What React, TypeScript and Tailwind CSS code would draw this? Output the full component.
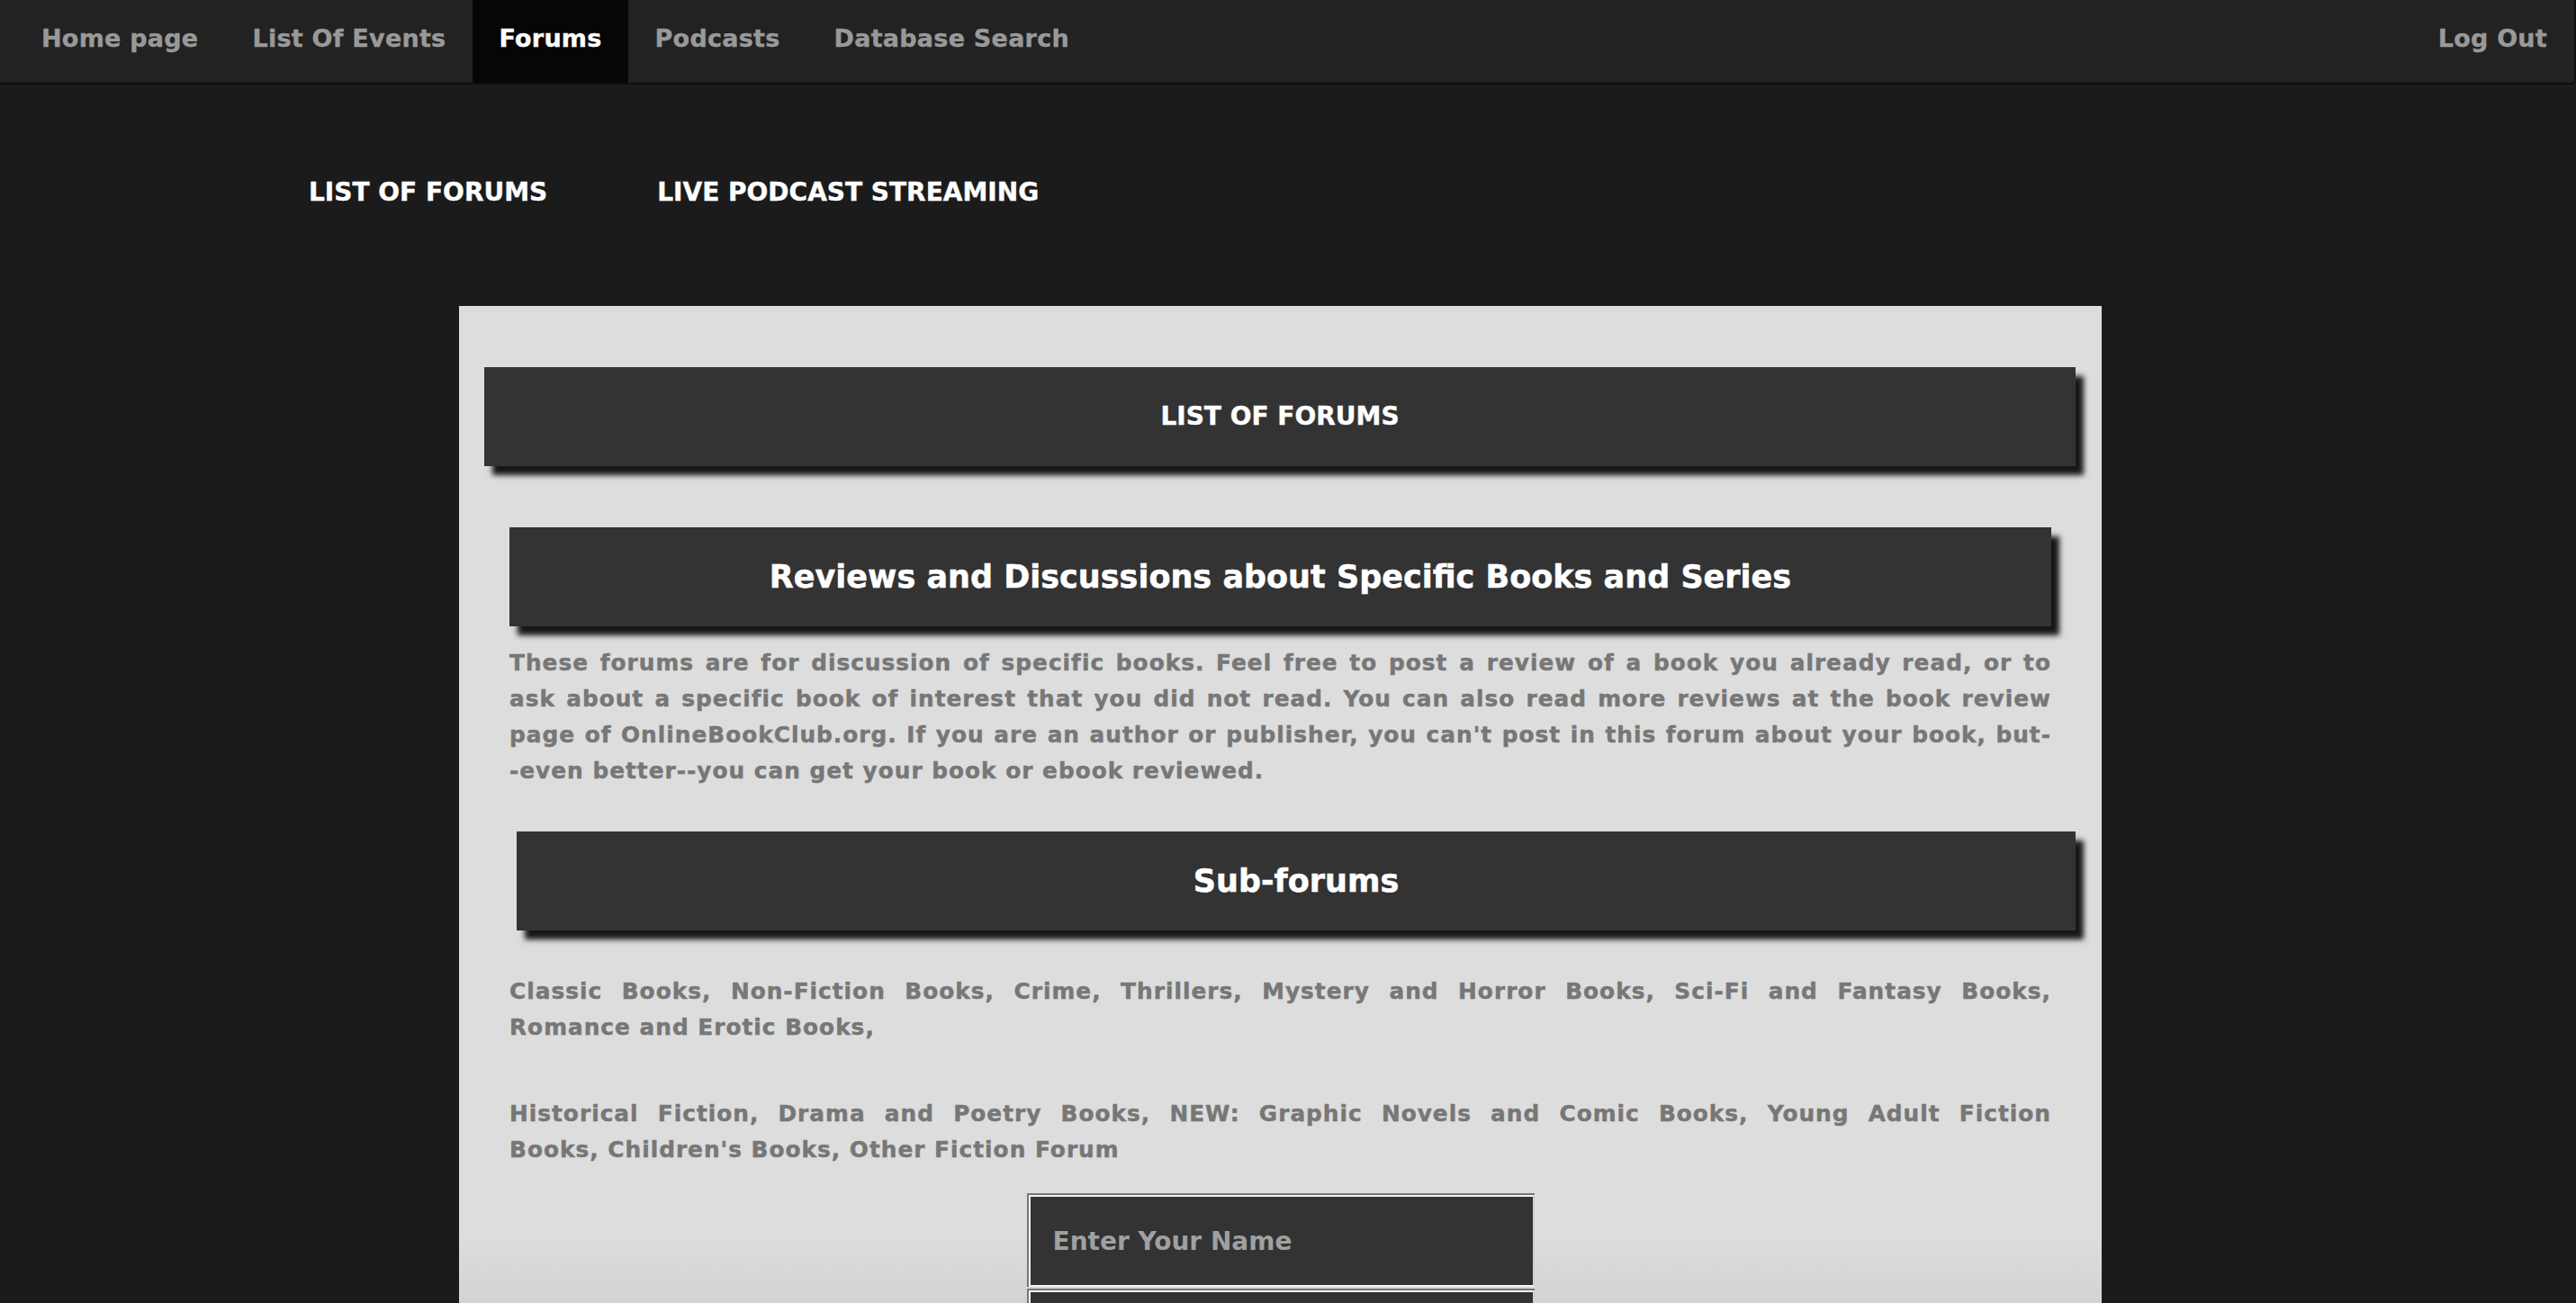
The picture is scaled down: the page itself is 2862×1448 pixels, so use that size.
import React from "react";

const font = { fontFamily: '"DejaVu Sans", "Liberation Sans", Arial, sans-serif' };

const navItems = ["Home page", "List Of Events", "Forums", "Podcasts", "Database Search"];

function Lines({ lines, className }: { lines: string[]; className: string }) {
  return (
    <p className={className}>
      {lines.map((line, i) => (
        <span
          key={i}
          className={i < lines.length - 1 ? "block text-justify [text-align-last:justify]" : "block text-left"}
        >
          {line}
        </span>
      ))}
    </p>
  );
}

const para =
  "mx-[56px] text-[24.8px] leading-[40px] tracking-[1px] text-[#777777] [-webkit-text-stroke:0.45px_#777777]";

export default function App() {
  return (
    <div className="min-h-screen w-full bg-[#1b1b1b] font-bold" style={font}>
      {/* Top navigation */}
      <nav className="flex h-[94px] items-start justify-between rounded-br-[6px] border-b-2 border-r-2 border-[#0f0f0f] bg-[#222222] pl-4">
        <ul className="flex">
          {navItems.map((item) => (
            <li key={item}>
              <a
                href="#"
                className={
                  item === "Forums"
                    ? "block h-[92px] bg-[#060606] px-[29px] pt-[29px] text-[27px] leading-[27px] tracking-[0.25px] text-white [-webkit-text-stroke:0.4px_#ffffff]"
                    : "block h-[92px] px-[30px] pt-[29px] text-[27px] leading-[27px] tracking-[0.25px] text-[#999999] [-webkit-text-stroke:0.4px_#999999]"
                }
              >
                {item}
              </a>
            </li>
          ))}
        </ul>
        <a
          href="#"
          className="block h-[92px] px-[30px] pt-[29px] text-[27px] leading-[27px] tracking-[0.25px] text-[#999999] [-webkit-text-stroke:0.4px_#999999]"
        >
          Log Out
        </a>
      </nav>

      {/* Sub navigation */}
      <div className="mt-[106px] flex gap-[122px] pl-[343px]">
        <a href="#" className="text-[28px] leading-[28px] text-white [-webkit-text-stroke:0.4px_#ffffff]">
          LIST OF FORUMS
        </a>
        <a href="#" className="text-[28px] leading-[28px] text-white [-webkit-text-stroke:0.4px_#ffffff]">
          LIVE PODCAST STREAMING
        </a>
      </div>

      {/* Main card */}
      <main className="ml-[510px] mt-[112px] w-[1825px] bg-[linear-gradient(to_bottom,#dddddd_0px,#dddddd_1030px,#cdcdcd_1160px,#cdcdcd_100%)] pb-[200px] pt-[68px]">
        <div className="ml-[28px] mr-[29px] flex h-[110px] items-center justify-center bg-[#333333] shadow-[9px_10px_6px_rgba(0,0,0,0.9)]">
          <h1 className="text-[28px] leading-[28px] text-white [-webkit-text-stroke:0.4px_#ffffff]">LIST OF FORUMS</h1>
        </div>

        <div className="mx-[56px] mt-[68px] flex h-[110px] items-center justify-center bg-[#333333] shadow-[9px_10px_6px_rgba(0,0,0,0.9)]">
          <h2 className="text-[35px] leading-[35px] text-white [-webkit-text-stroke:0.5px_#ffffff]">
            Reviews and Discussions about Specific Books and Series
          </h2>
        </div>

        <Lines
          className={"mt-[21px] " + para}
          lines={[
            "These forums are for discussion of specific books. Feel free to post a review of a book you already read, or to",
            "ask about a specific book of interest that you did not read. You can also read more reviews at the book review",
            "page of OnlineBookClub.org. If you are an author or publisher, you can't post in this forum about your book, but-",
            "-even better--you can get your book or ebook reviewed.",
          ]}
        />

        <div className="ml-[64px] mr-[29px] mt-[47px] flex h-[110px] items-center justify-center bg-[#333333] shadow-[9px_10px_6px_rgba(0,0,0,0.9)]">
          <h2 className="text-[35px] leading-[35px] text-white [-webkit-text-stroke:0.5px_#ffffff]">Sub-forums</h2>
        </div>

        <Lines
          className={"mt-[48px] " + para}
          lines={[
            "Classic Books, Non-Fiction Books, Crime, Thrillers, Mystery and Horror Books, Sci-Fi and Fantasy Books,",
            "Romance and Erotic Books,",
          ]}
        />

        <Lines
          className={"mt-[56px] " + para}
          lines={[
            "Historical Fiction, Drama and Poetry Books, NEW: Graphic Novels and Comic Books, Young Adult Fiction",
            "Books, Children's Books, Other Fiction Forum",
          ]}
        />

        <form className="mx-auto mt-[28px] flex w-[564px] flex-col gap-[2px]">
          <div className="border-l-2 border-t-2 border-[#777777]">
            <input
              type="text"
              placeholder="Enter Your Name"
              className="block h-[102px] w-full border-2 border-[#f2f2f2] border-r-[#cfcfcf] bg-[#333333] px-[25px] text-[28px] font-bold text-white outline-none placeholder:text-[#a0a0a0]"
              style={font}
            />
          </div>
          <div className="border-l-2 border-t-2 border-[#777777]">
            <input
              type="text"
              placeholder="Enter Your Email"
              className="block h-[102px] w-full border-2 border-[#f2f2f2] border-r-[#cfcfcf] bg-[#333333] px-[25px] text-[28px] font-bold text-white outline-none placeholder:text-[#a0a0a0]"
              style={font}
            />
          </div>
        </form>
      </main>
    </div>
  );
}
